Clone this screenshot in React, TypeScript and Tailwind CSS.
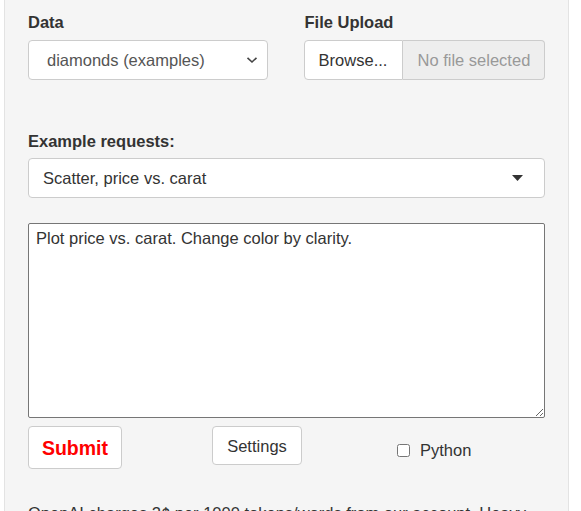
import React from "react";

export default function App() {
  return (
    <div
      className="w-[581px] h-[511px] overflow-hidden bg-white"
      style={{ fontFamily: '"Liberation Sans", Arial, Helvetica, sans-serif' }}
    >
      <div className="ml-[4px] w-[565px] h-[511px] bg-[#f5f5f5] border-l border-r border-[#e3e3e3] px-[23px] pt-[11px] text-[16.5px] leading-[22px] text-[#333]">
        <div className="flex">
          <div className="w-[240px]">
            <div className="font-bold mb-[7px]">Data</div>
            <div className="h-[40px] bg-white border border-[#ccc] rounded-[4px] flex items-center pl-[18px] pr-[8px] text-[#555]">
              <span className="flex-1">diamonds (examples)</span>
              <svg width="12" height="8" viewBox="0 0 12 8" className="mr-[1px]">
                <path d="M1.5 1.8 L6 6 L10.5 1.8" fill="none" stroke="#444" strokeWidth="1.6" />
              </svg>
            </div>
          </div>
          <div className="ml-[36px] w-[242px]">
            <div className="font-bold mb-[7px] pl-[1px]">File Upload</div>
            <div className="flex h-[40px]">
              <div className="w-[99px] bg-white border border-[#ccc] rounded-l-[4px] flex items-center justify-center text-[#333]">
                Browse...
              </div>
              <div className="flex-1 bg-[#eeeeee] border border-l-0 border-[#ccc] rounded-r-[4px] flex items-center pl-[15px] text-[#999] whitespace-nowrap overflow-hidden">
                No file selected
              </div>
            </div>
          </div>
        </div>

        <div className="font-bold mt-[50px] mb-[6px]">Example requests:</div>
        <div className="h-[40px] bg-white border border-[#ccc] rounded-[4px] flex items-center pl-[14px] pr-[21px]">
          <span className="flex-1 text-[#333]">Scatter, price vs. carat</span>
          <svg width="11" height="6" viewBox="0 0 11 6">
            <path d="M0 0 L11 0 L5.5 6 Z" fill="#333" />
          </svg>
        </div>

        <textarea
          className="block mt-[25px] w-full h-[195px] bg-white border border-[#767676] rounded-[2px] px-[7px] pt-[4px] text-[16.5px] leading-[20px] text-[#333] resize-y outline-none"
          defaultValue="Plot price vs. carat. Change color by clarity."
        />

        <div className="flex items-start mt-[8px]">
          <button className="w-[94px] h-[43px] bg-white border border-[#ccc] rounded-[4px] text-[19.5px] font-bold text-[#ff0000] flex items-center justify-center">
            Submit
          </button>
          <button className="ml-[90px] w-[90px] h-[39px] bg-white border border-[#ccc] rounded-[4px] text-[16.5px] text-[#333] flex items-center justify-center">
            Settings
          </button>
          <label className="ml-[95px] mt-[13px] flex items-center h-[22px]">
            <input type="checkbox" className="w-[13px] h-[13px] m-0" />
            <span className="ml-[10px] text-[#333]">Python</span>
          </label>
        </div>

        <p className="mt-[33px] text-[#333]">
          OpenAI charges 2¢ per 1000 tokens/words from our account. Heavy users are encouraged to use your own API key.
        </p>
      </div>
    </div>
  );
}
